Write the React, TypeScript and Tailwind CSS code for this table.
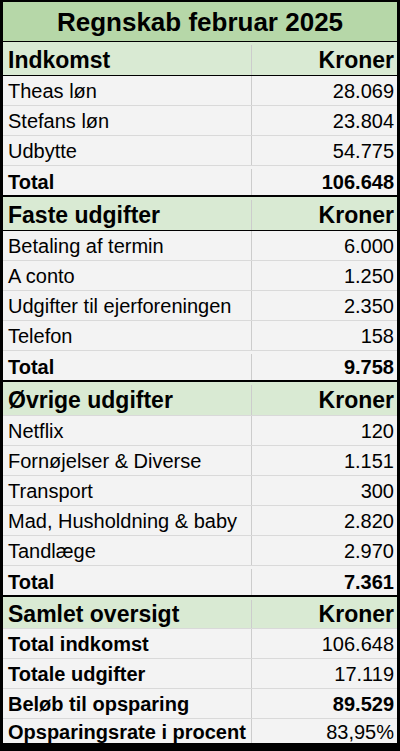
type Kind = 'header' | 'data' | 'total' | 'boldLabel' | 'boldBoth'

type Row = { label: string; value: string; kind: Kind; line?: 'black' | 'gray' | 'none'; h?: string }

const SECTIONS: Row[][] = [
  [
    { label: 'Indkomst', value: 'Kroner', kind: 'header', line: 'black' },
    { label: 'Theas løn', value: '28.069', kind: 'data' },
    { label: 'Stefans løn', value: '23.804', kind: 'data' },
    { label: 'Udbytte', value: '54.775', kind: 'data' },
    { label: 'Total', value: '106.648', kind: 'total' },
  ],
  [
    { label: 'Faste udgifter', value: 'Kroner', kind: 'header', line: 'black' },
    { label: 'Betaling af termin', value: '6.000', kind: 'data' },
    { label: 'A conto', value: '1.250', kind: 'data' },
    { label: 'Udgifter til ejerforeningen', value: '2.350', kind: 'data' },
    { label: 'Telefon', value: '158', kind: 'data' },
    { label: 'Total', value: '9.758', kind: 'total' },
  ],
  [
    { label: 'Øvrige udgifter', value: 'Kroner', kind: 'header', line: 'gray' },
    { label: 'Netflix', value: '120', kind: 'data' },
    { label: 'Fornøjelser & Diverse', value: '1.151', kind: 'data' },
    { label: 'Transport', value: '300', kind: 'data' },
    { label: 'Mad, Husholdning & baby', value: '2.820', kind: 'data' },
    { label: 'Tandlæge', value: '2.970', kind: 'data' },
    { label: 'Total', value: '7.361', kind: 'total' },
  ],
  [
    { label: 'Samlet oversigt', value: 'Kroner', kind: 'header', line: 'gray', h: 'h-[32px] pt-[3px]' },
    { label: 'Total indkomst', value: '106.648', kind: 'boldLabel' },
    { label: 'Totale udgifter', value: '17.119', kind: 'boldLabel' },
    { label: 'Beløb til opsparing', value: '89.529', kind: 'boldBoth' },
    // sidste række er beskåret i bunden
    { label: 'Opsparingsrate i procent', value: '83,95%', kind: 'boldLabel', line: 'none', h: 'h-[25px]' },
  ],
]

function SheetRow({ row }: { row: Row }) {
  const header = row.kind === 'header'
  const total = row.kind === 'total'
  const line = row.line ?? (total ? 'black' : 'gray')
  const lineCls = total
    ? 'border-b-2 border-black'
    : line === 'black'
      ? 'border-b border-black'
      : line === 'gray'
        ? 'border-b border-[#d9d9d9]'
        : ''
  const height = row.h ?? (header ? 'h-[34px] pt-[3px]' : total ? 'h-[31px] pt-[3px]' : 'h-[30px]')
  const labelBold = header || total || row.kind === 'boldLabel' || row.kind === 'boldBoth'
  const valueBold = header || total || row.kind === 'boldBoth'
  const size = header ? 'text-[23px]' : 'text-[20px]'

  return (
    <div className={`flex shrink-0 ${height} ${lineCls} ${header ? 'bg-[#d9ead3]' : 'bg-[#f3f3f3]'}`}>
      <div
        className={`w-[249px] shrink-0 border-r border-[#cccccc] pl-[5px] flex items-center whitespace-nowrap overflow-hidden ${size} ${labelBold ? 'font-bold' : ''}`}
      >
        {row.label}
      </div>
      <div
        className={`flex-1 pr-[3px] flex items-center justify-end whitespace-nowrap ${size} ${valueBold ? 'font-bold' : ''}`}
      >
        {row.value}
      </div>
    </div>
  )
}

export default function App() {
  return (
    <div
      className="w-[400px] h-[751px] overflow-hidden bg-[#f3f3f3] border-l-[3px] border-r-[3px] border-t-2 border-b-[8px] border-black text-black leading-none"
      style={{ fontFamily: '"Liberation Sans", Arial, sans-serif' }}
    >
      {/* titel */}
      <div className="h-[40px] bg-[#b6d7a8] border-b border-black flex items-center justify-center text-[26px] font-bold">
        Regnskab februar 2025
      </div>
      {SECTIONS.map((section, i) => (
        <div key={i}>
          {section.map((row, j) => (
            <SheetRow key={j} row={row} />
          ))}
        </div>
      ))}
    </div>
  )
}
